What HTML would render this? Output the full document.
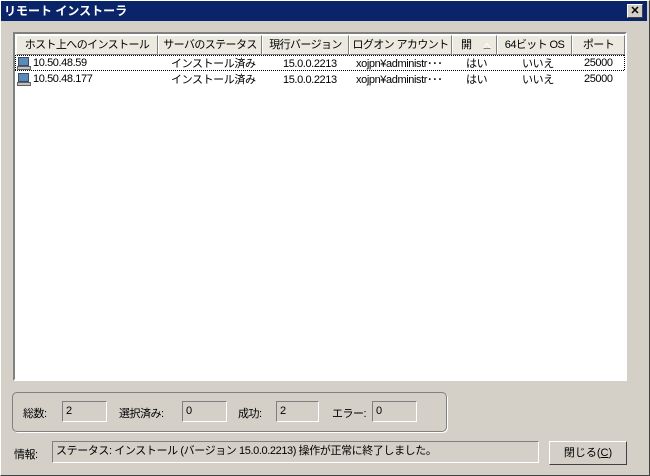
<!DOCTYPE html><html><head><meta charset="utf-8"><style>
*{margin:0;padding:0;box-sizing:border-box}
body{width:650px;height:476px;background:#d4d0c8;font-family:"Liberation Sans","Noto Sans CJK JP",sans-serif;font-size:11px;color:#000;position:relative;overflow:hidden}
.win{position:absolute;left:0;top:0;width:650px;height:476px;border:1px solid #fff;border-right-color:#404040;border-bottom-color:#404040}
.title{position:absolute;left:1px;top:1px;width:646px;height:20px;background:#0a246a;color:#fff;font-weight:bold;font-size:12px;line-height:20px;padding-left:3px}
.xbtn{position:absolute;left:627px;top:4px;width:16px;height:14px;background:#d4d0c8;border:1px solid #fff;border-right-color:#404040;border-bottom-color:#404040;color:#000;font-size:11px;line-height:12px;text-align:center;font-weight:bold}
.a{position:absolute;white-space:nowrap}
.list{position:absolute;left:13px;top:32px;width:614px;height:349px;background:#fff;border:2px solid #808080;border-right-color:#fff;border-bottom-color:#fff}
.hd{position:absolute;top:35px;height:20px;background:#ece9e0;border:1px solid #fff;border-right-color:#808080;border-bottom-color:#808080;text-align:center;line-height:18px;font-size:11px;letter-spacing:-0.6px;overflow:hidden;white-space:nowrap}
.r{position:absolute;font-size:11px;line-height:14px;letter-spacing:-0.4px}
.grp{position:absolute;left:12px;top:392px;width:435px;height:40px;border:1px solid #808080;border-radius:5px;box-shadow:1px 1px 0 #fff}
.tb{position:absolute;height:21px;border:1px solid #808080;border-right-color:#fff;border-bottom-color:#fff;background:#d4d0c8;padding-left:3px;line-height:18px;font-size:11px;letter-spacing:-0.4px;white-space:nowrap}
.lb{font-size:11px;letter-spacing:-0.5px}
.btn{position:absolute;left:549px;top:441px;width:78px;height:24px;border:1px solid #fff;border-right-color:#404040;border-bottom-color:#404040;text-align:center;line-height:22px;font-size:11px}
.dh{position:absolute;height:1px;background:repeating-linear-gradient(90deg,#000 0 1px,transparent 1px 2px)}
.dv{position:absolute;width:1px;background:repeating-linear-gradient(180deg,#000 0 1px,transparent 1px 2px)}
</style></head><body><div class="win"></div>
<div class="title">リモート インストーラ</div>
<div class="xbtn">✕</div>
<div class="list"></div>
<div class="hd" style="left:16px;width:142px">ホスト上へのインストール</div>
<div class="hd" style="left:158px;width:104px">サーバのステータス</div>
<div class="hd" style="left:262px;width:87px">現行バージョン</div>
<div class="hd" style="left:349px;width:103px">ログオン アカウント</div>
<div class="hd" style="left:452px;width:45px;text-align:left;padding-left:8px">開<svg style="position:absolute;left:30px;top:7px" width="8" height="6"><path d="M0.5 5.5 L4 0.5 L7.5 5.5 Z" fill="none" stroke="#fff"/><path d="M0.5 5.5 H7.5" stroke="#808080"/></svg></div>
<div class="hd" style="left:497px;width:75px">64ビット OS</div>
<div class="hd" style="left:572px;width:53px">ポート</div>
<div class="dh" style="left:15px;top:55px;width:610px"></div>
<div class="dh" style="left:15px;top:70px;width:610px"></div>
<div class="dv" style="left:15px;top:55px;height:16px"></div>
<div class="dv" style="left:624px;top:55px;height:16px"></div>
<svg class="a" style="left:16px;top:56px" width="16" height="30"><g><rect x="2.5" y="1.5" width="10" height="8" fill="#5a8ab8" stroke="#3a4a6a"/><rect x="1.5" y="10.5" width="13" height="3" fill="#c0c0c0" stroke="#606060"/></g><g transform="translate(0,16)"><rect x="2.5" y="1.5" width="10" height="8" fill="#5a8ab8" stroke="#3a4a6a"/><rect x="1.5" y="10.5" width="13" height="3" fill="#c0c0c0" stroke="#606060"/></g></svg>
<div class="r a" style="left:33px;top:56px">10.50.48.59</div>
<div class="r a" style="left:33px;top:72px">10.50.48.177</div>
<div class="r a" style="left:171px;top:57px">インストール済み</div>
<div class="r a" style="left:171px;top:73px">インストール済み</div>
<div class="r a" style="left:283px;top:57px">15.0.0.2213</div>
<div class="r a" style="left:283px;top:73px">15.0.0.2213</div>
<div class="r a" style="left:356px;top:57px">xojpn¥administr･･･</div>
<div class="r a" style="left:356px;top:73px">xojpn¥administr･･･</div>
<div class="r a" style="left:466px;top:57px">はい</div>
<div class="r a" style="left:466px;top:73px">はい</div>
<div class="r a" style="left:522px;top:57px">いいえ</div>
<div class="r a" style="left:522px;top:73px">いいえ</div>
<div class="r a" style="left:584px;top:56px">25000</div>
<div class="r a" style="left:584px;top:72px">25000</div>
<div class="grp"></div>
<div class="a lb" style="left:23px;top:405px">総数:</div>
<div class="tb" style="left:62px;top:401px;width:45px">2</div>
<div class="a lb" style="left:119px;top:405px">選択済み:</div>
<div class="tb" style="left:182px;top:401px;width:45px">0</div>
<div class="a lb" style="left:238px;top:405px">成功:</div>
<div class="tb" style="left:276px;top:401px;width:43px">2</div>
<div class="a lb" style="left:332px;top:405px">エラー:</div>
<div class="tb" style="left:372px;top:401px;width:45px">0</div>
<div class="a lb" style="left:14px;top:446px">情報:</div>
<div class="tb" style="left:52px;top:441px;width:487px;height:22px">ステータス: インストール (バージョン 15.0.0.2213) 操作が正常に終了しました。</div>
<div class="btn">閉じる(<u>C</u>)</div>
</body></html>
